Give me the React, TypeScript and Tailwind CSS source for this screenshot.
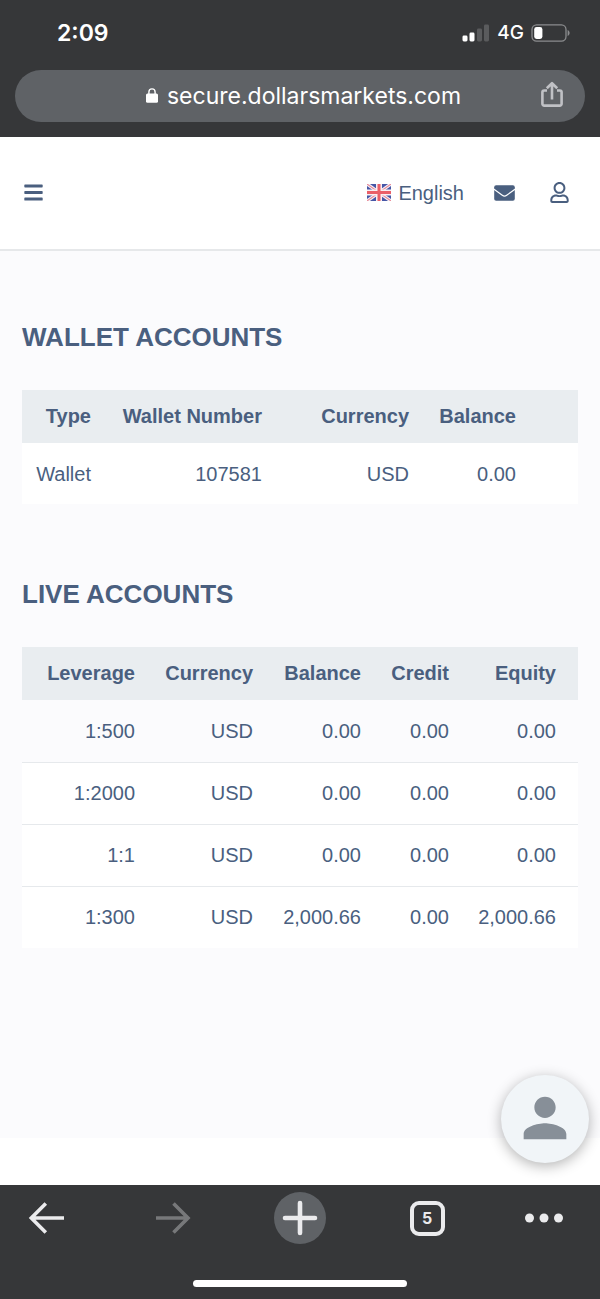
import React from "react";
import { FaBars, FaRegUser } from "react-icons/fa";
import { MdPerson } from "react-icons/md";

type Row = string[];

const liveRows: Row[] = [
  ["1:500", "USD", "0.00", "0.00", "0.00"],
  ["1:2000", "USD", "0.00", "0.00", "0.00"],
  ["1:1", "USD", "0.00", "0.00", "0.00"],
  ["1:300", "USD", "2,000.66", "0.00", "2,000.66"],
];

function StatusBar() {
  return (
    <div className="flex h-[70px] items-start justify-between pt-[18px] pr-[30px] pl-[57px] text-white">
      <span className="text-[23px] leading-[30px] font-semibold">2:09</span>
      <div className="flex h-[30px] items-center">
        <svg className="mr-[7px] h-[18px] w-7" viewBox="0 0 28 18" aria-label="Signal">
          <rect x="0.5" y="11.5" width="5" height="6" rx="1.4" fill="#fff" />
          <rect x="7.5" y="8.5" width="5" height="9" rx="1.4" fill="#fff" />
          <rect x="15" y="4.5" width="5" height="13" rx="1.4" fill="#5a5b5d" />
          <rect x="22" y="0.5" width="5" height="17" rx="1.4" fill="#5a5b5d" />
        </svg>
        <span className="mr-[7px] text-[19px] leading-[30px] font-medium">4G</span>
        <svg className="h-[18px] w-[39px]" viewBox="0 0 39 18" aria-label="Battery">
          <rect x="1" y="0.8" width="34" height="16.4" rx="4.6" fill="none" stroke="#8b8c8e" strokeWidth="1.3" />
          <rect x="3.2" y="3" width="8.2" height="12" rx="2.4" fill="#fff" />
          <path d="M36.6 6v6c1.200-.5 2-1.600 2-3s-.8-2.500-2-3z" fill="#8b8c8e" />
        </svg>
      </div>
    </div>
  );
}

function AddressBar() {
  return (
    <div className="mx-[15px] flex h-[52px] items-center rounded-full bg-[#5f6266] pr-5 pl-[53px] text-white">
      <div className="flex flex-1 items-center justify-center gap-[9px]">
        <svg className="-mt-px h-[15px] w-3" viewBox="0 0 12 15" aria-label="Secure">
          <rect x="0" y="5.400" width="12" height="9.400" rx="1.500" fill="#fff" />
          <path d="M2.900 6V4a3.100 3.100 0 0 1 6.200 0v2" fill="none" stroke="#fff" strokeWidth="1.400" />
        </svg>
        <span className="text-[23px] leading-8">secure.dollarsmarkets.com</span>
      </div>
      <button type="button" aria-label="Share" className="-mt-1">
        <svg className="h-7 w-[26px]" viewBox="0 0 26 28" fill="none" stroke="#c0c1c5" strokeWidth="2.600" strokeLinejoin="round">
          <path d="M8 10.500H5.200a1.800 1.800 0 0 0-1.800 1.800v11.500a1.800 1.800 0 0 0 1.800 1.800h15.600a1.800 1.800 0 0 0 1.800-1.800V12.300a1.800 1.800 0 0 0-1.800-1.800H18" />
          <path d="M13 19.500V3.500M7.800 8.300 13 3.200l5.200 5.100" />
        </svg>
      </button>
    </div>
  );
}

function UnionFlag() {
  return (
    <svg className="h-[17px] w-6" viewBox="0 0 24 17" aria-hidden="true">
      <rect width="24" height="17" fill="#4656a6" />
      <path d="M0 0 24 17M24 0 0 17" stroke="#f4f1f8" strokeWidth="3.400" />
      <path d="M0 0 24 17M24 0 0 17" stroke="#e88a97" strokeWidth="1.100" />
      <path d="M12 0v17M0 8.500h24" stroke="#f9eff2" strokeWidth="6" />
      <path d="M12 0v17M0 8.500h24" stroke="#ea5f68" strokeWidth="3" />
    </svg>
  );
}

function Envelope() {
  return (
    <svg className="h-4 w-[21px]" viewBox="0 0 21 16" aria-hidden="true">
      <rect x="0.2" y="0.3" width="20.600" height="15.400" rx="1.900" fill="currentColor" />
      <path d="M0 4.200 8.300 10.300a3.700 3.700 0 0 0 4.400 0L21 4.200" fill="none" stroke="#fff" strokeWidth="1.200" />
    </svg>
  );
}

function PageHeader() {
  return (
    <header className="flex h-[114px] items-center justify-between border-b-2 border-[#e6e8ea] bg-white pr-[30px] pb-px pl-[23px] text-[#4a5f7f]">
      <button type="button" aria-label="Menu">
        <FaBars size={21} />
      </button>
      <nav className="flex items-center">
        <a href="#language" className="flex items-center gap-[7px] text-[20px] leading-6">
          <UnionFlag />
          English
        </a>
        <a href="#messages" aria-label="Messages" className="ml-[30px]">
          <Envelope />
        </a>
        <a href="#profile" aria-label="Profile" className="ml-[34px]">
          <FaRegUser size={21} />
        </a>
      </nav>
    </header>
  );
}

const head = "h-[53px] px-[15px] pb-px text-right font-bold whitespace-nowrap";
const cell = "px-[15px] text-right whitespace-nowrap";

function WalletAccounts() {
  return (
    <section>
      <h2 className="mb-[33px] text-[26px] leading-10 font-bold">WALLET ACCOUNTS</h2>
      <table className="w-full table-fixed border-collapse text-[20px] leading-6">
        <colgroup>
          <col className="w-[84px]" />
          <col className="w-[171px]" />
          <col className="w-[147px]" />
          <col className="w-[107px]" />
          <col />
        </colgroup>
        <thead className="bg-[#e9edf0]">
          <tr>
            <th className={head}>Type</th>
            <th className={head}>Wallet Number</th>
            <th className={head}>Currency</th>
            <th className={head}>Balance</th>
            <td />
          </tr>
        </thead>
        <tbody className="bg-white">
          <tr className="h-[61px]">
            <td className="pr-[15px] text-right">Wallet</td>
            <td className={cell}>107581</td>
            <td className={cell}>USD</td>
            <td className={cell}>0.00</td>
            <td />
          </tr>
        </tbody>
      </table>
    </section>
  );
}

function LiveAccounts() {
  return (
    <section className="mt-[70px]">
      <h2 className="mb-[33px] text-[26px] leading-10 font-bold">LIVE ACCOUNTS</h2>
      <table className="w-full table-fixed border-collapse text-[20px] leading-6">
        <colgroup>
          <col className="w-[128px]" />
          <col className="w-[118px]" />
          <col className="w-[108px]" />
          <col className="w-[88px]" />
          <col />
        </colgroup>
        <thead className="bg-[#e9edf0]">
          <tr>
            <th className={head}>Leverage</th>
            <th className={head}>Currency</th>
            <th className={head}>Balance</th>
            <th className={head}>Credit</th>
            <th className="pr-[22px] pb-px text-right font-bold">Equity</th>
          </tr>
        </thead>
        <tbody>
          {liveRows.map((row) => (
            <tr key={row[0]} className="h-[62px] border-b border-[#e6e9ec] bg-white first:bg-[#fbfbfd] last:border-b-0">
              {row.map((value, i) => (
                <td key={i} className={i === 4 ? "pr-[22px] text-right" : i === 2 ? "pr-[15px] text-right" : cell}>
                  {value}
                </td>
              ))}
            </tr>
          ))}
        </tbody>
      </table>
    </section>
  );
}

function BottomBar() {
  return (
    <footer className="bg-[#363739] pt-[7px] pb-3 font-[Inter,sans-serif]">
      <div className="flex items-center justify-between px-5">
        <button type="button" aria-label="Back" className="flex size-[52px] items-center justify-center">
          <svg className="h-8 w-9" viewBox="0 0 36 32" fill="none" stroke="#ebebed" strokeWidth="3.600">
            <path d="M36 16H4M17.800 1.500 3.300 16l14.500 14.500" />
          </svg>
        </button>
        <button type="button" aria-label="Forward" className="flex size-[52px] items-center justify-center">
          <svg className="h-8 w-9" viewBox="0 0 36 32" fill="none" stroke="#77787a" strokeWidth="3.600">
            <path d="M1 16h32M18.500 1.500 33 16 18.500 30.500" />
          </svg>
        </button>
        <button type="button" aria-label="New tab" className="flex size-[52px] items-center justify-center rounded-full bg-[#5f6266]">
          <svg className="size-9" viewBox="0 0 36 36" fill="none" stroke="#ebebed" strokeWidth="4.600" strokeLinecap="round">
            <path d="M18 3v30M3 18h30" />
          </svg>
        </button>
        <button type="button" aria-label="Tabs" className="flex size-[52px] items-center justify-center">
          <span className="flex size-[35px] items-center justify-center rounded-[9px] border-4 border-[#ebebed] text-[16px] leading-5 font-bold text-[#ebebed]">
            5
          </span>
        </button>
        <button type="button" aria-label="More" className="flex size-[52px] items-center justify-end pr-[17px]">
          <svg className="h-[10px] w-[38px] shrink-0" viewBox="0 0 38 10" fill="#ebebed">
            <circle cx="4.500" cy="5" r="4.500" />
            <circle cx="19" cy="5" r="4.500" />
            <circle cx="33.500" cy="5" r="4.500" />
          </svg>
        </button>
      </div>
      <div className="mx-auto mt-9 h-[7px] w-[214px] rounded-full bg-white" />
    </footer>
  );
}

export default function App() {
  return (
    <div className="relative flex min-h-screen flex-col bg-white font-['Liberation_Sans',Arial,sans-serif]">
      <div className="bg-[#363739] pb-[15px] font-[Inter,sans-serif]">
        <StatusBar />
        <AddressBar />
      </div>
      <PageHeader />
      <main className="flex-1 bg-[#fbfbfd] px-[22px] pt-[66px] pb-[190px] text-[#4a5f7f]">
        <WalletAccounts />
        <LiveAccounts />
      </main>
      <div className="h-[47px] bg-white" />
      <BottomBar />
      <button
        type="button"
        aria-label="Contact support"
        className="absolute right-[11px] bottom-[136px] flex size-[88px] items-center justify-center rounded-full bg-[#f1f5f8] pb-0.5 text-[#878f98] shadow-[0_3px_14px_rgba(0,0,0,0.3)]"
      >
        <MdPerson size={64} />
      </button>
    </div>
  );
}
